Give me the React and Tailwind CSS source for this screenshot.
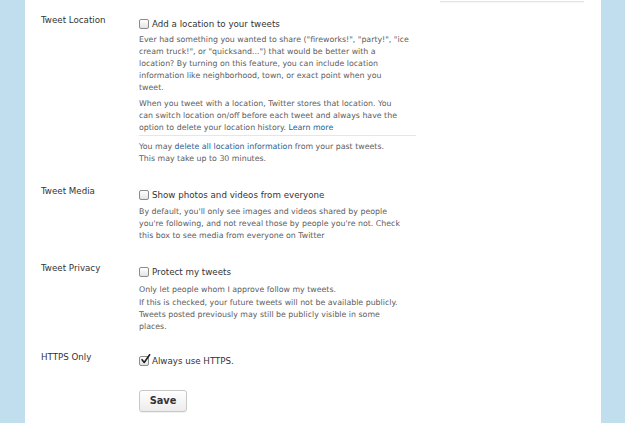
import React from 'react';

const Box = ({ checked }) => (
  <span className="relative w-[10px] h-[10px] shrink-0 rounded-[2px] border border-[#8c8c8c] bg-linear-to-b from-white to-[#e4e4e4]">
    {checked && (
      <svg viewBox="0 0 12 12" className="absolute left-[0px] top-[-3px] w-[11px] h-[11px] overflow-visible">
        <path d="M2.2 6.2 L4.6 9.2 L10.5 0.8" stroke="#1e1e1e" strokeWidth="1.7" fill="none" strokeLinecap="round" strokeLinejoin="round" />
      </svg>
    )}
  </span>
);

const Check = ({ checked, children }) => (
  <label className="flex items-center gap-[3px] h-[12px] text-[8.7px] leading-[12px] text-[#333]">
    <Box checked={checked} />
    <span>{children}</span>
  </label>
);

const Row = ({ label, className, children }) => (
  <div className={'flex ' + (className || '')}>
    <div className="w-[98px] shrink-0 text-[8.7px] leading-[12px] text-[#333]">{label}</div>
    <div className="w-[277px] pt-[4px]">{children}</div>
  </div>
);

const Link = ({ children }) => <a className="text-[#2a6296]">{children}</a>;

const App = () => {
  return (
    <div className="min-h-[423px] flex bg-[#c0deed] font-['DejaVu_Sans',sans-serif]">
      <div className="w-[25px] shrink-0" />

      <div className="w-[576px] shrink-0 bg-white flex">
        {/* settings form */}
        <main className="w-[391px] pl-[16px] pt-[14px]">
          <Row label="Tweet Location">
            <Check>Add a location to your tweets</Check>
            <div className="mt-[4px] text-[7.85px] leading-[12px] text-[#606060]">
              <p>
                Ever had something you wanted to share ("fireworks!", "party!", "ice<br />
                cream truck!", or "quicksand...") that would be better with a<br />
                location? By turning on this feature, you can include location<br />
                information like neighborhood, town, or exact point when you<br />
                tweet.
              </p>
              <p className="mt-[4px]">
                When you tweet with a location, Twitter stores that location. You<br />
                can switch location on/off before each tweet and always have the<br />
                option to delete your location history. <Link>Learn more</Link>
              </p>
              <p className="mt-[1px] pt-[5px] border-t border-[#e6e6e6] leading-[12.3px]">
                You may <Link>delete all location information</Link> from your past tweets.<br />
                This may take up to 30 minutes.
              </p>
            </div>
          </Row>

          <Row label="Tweet Media" className="mt-[19px]">
            <Check>Show photos and videos from everyone</Check>
            <p className="mt-[5px] text-[7.85px] leading-[12.3px] text-[#606060]">
              By default, you'll only see images and videos shared by people<br />
              you're following, and not reveal those by people you're not. Check<br />
              this box to see media from everyone on Twitter
            </p>
          </Row>

          <Row label="Tweet Privacy" className="mt-[20px]">
            <Check>Protect my tweets</Check>
            <p className="mt-[6px] text-[7.85px] leading-[12.3px] text-[#606060]">
              Only let people whom I approve follow my tweets.<br />
              If this is checked, your future tweets will not be available publicly.<br />
              Tweets posted previously may still be publicly visible in some<br />
              places.
            </p>
          </Row>

          <Row label="HTTPS Only" className="mt-[17px]">
            <Check checked>Always use HTTPS.</Check>
          </Row>

          <div className="pl-[98px] mt-[20px]">
            <button className="w-[48px] h-[22px] rounded-[3px] border border-[#c8c8c8] bg-linear-to-b from-white to-[#ececec] shadow-[0_1px_0_rgba(0,0,0,0.05)] text-[9.8px] font-bold text-[#333]">
              Save
            </button>
          </div>
        </main>

        {/* sidebar box, only its bottom edge shows */}
        <aside className="ml-[24px] w-[144px]">
          <div className="h-[2px] border-b border-[#e4e4e4] shadow-[0_1px_1px_rgba(0,0,0,0.04)]" />
        </aside>
      </div>

      <div className="flex-1" />
    </div>
  );
};

export default App;
